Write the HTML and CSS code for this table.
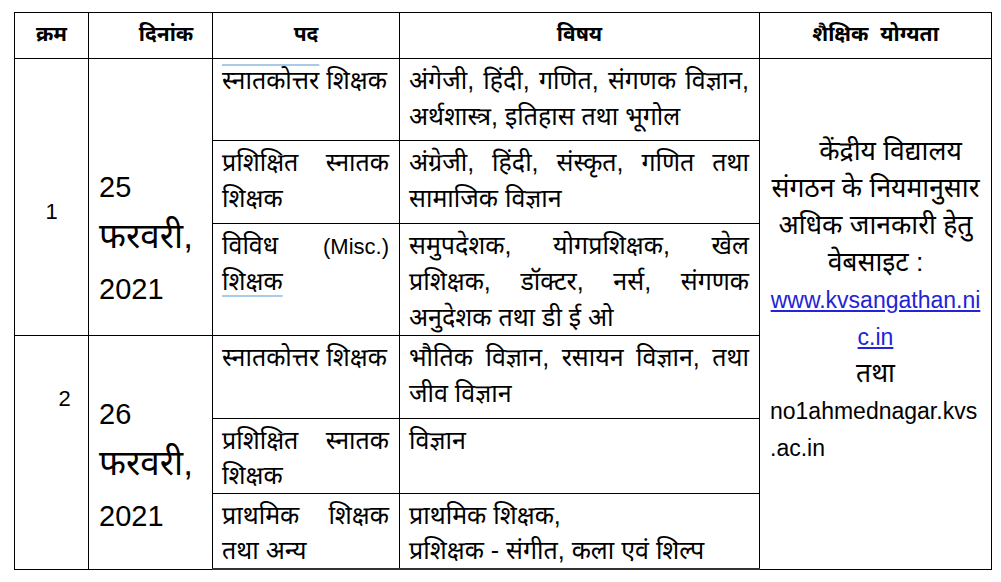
FILE: index.html
```html
<!DOCTYPE html>
<html lang="hi">
<head>
<meta charset="utf-8">
<title>KVS</title>
<link rel="stylesheet" href="styles.css">
</head>
<body>
<div class="sheet">
<table class="kvs">
  <colgroup>
    <col class="c-sn"><col class="c-date"><col class="c-post"><col class="c-subj"><col class="c-qual">
  </colgroup>
  <thead>
    <tr class="r-head">
      <th>क्रम</th>
      <th class="th-date">दिनांक</th>
      <th>पद</th>
      <th>विषय</th>
      <th>शैक्षिक योग्यता</th>
    </tr>
  </thead>
  <tbody>
    <tr class="r1">
      <td rowspan="3" class="sn sn-1">1</td>
      <td rowspan="3" class="date date-1"><span class="dl"><span class="lat">25</span></span><span class="dl">फरवरी,</span><span class="dl"><span class="lat">2021</span></span></td>
      <td class="txt"><span class="mark-top">स्नातकोत्तर</span> शिक्षक</td>
      <td class="txt"><span class="jl">अंगेजी, हिंदी, गणित, संगणक विज्ञान,</span>अर्थशास्त्र, इतिहास तथा भूगोल</td>
      <td rowspan="6" class="qual">
        <span class="q-line q-indent">केंद्रीय विद्यालय</span>
        <span class="q-line">संगठन के नियमानुसार</span>
        <span class="q-line">अधिक जानकारी हेतु</span>
        <span class="q-line">वेबसाइट :</span>
        <span class="q-line"><a class="lat link" href="#">www.kvsangathan.ni</a></span>
        <span class="q-line"><a class="lat link" href="#">c.in</a></span>
        <span class="q-line">तथा</span>
        <span class="q-line q-left"><span class="lat">no1ahmednagar.kvs</span></span>
        <span class="q-line q-left"><span class="lat">.ac.in</span></span>
      </td>
    </tr>
    <tr class="r2">
      <td class="txt"><span class="jl">प्रशिक्षित स्नातक</span>शिक्षक</td>
      <td class="txt"><span class="jl">अंग्रेजी, हिंदी, संस्कृत, गणित तथा</span>सामाजिक विज्ञान</td>
    </tr>
    <tr class="r3">
      <td class="txt"><span class="jl">विविध <span class="lat">(Misc.)</span></span><span class="mark-under">शिक्षक</span></td>
      <td class="txt"><span class="jl">समुपदेशक, योगप्रशिक्षक, खेल</span><span class="jl">प्रशिक्षक, डॉक्टर, नर्स, संगणक</span>अनुदेशक तथा डी ई ओ</td>
    </tr>
    <tr class="r4">
      <td rowspan="3" class="sn sn-2">2</td>
      <td rowspan="3" class="date date-2"><span class="dl"><span class="lat">26</span></span><span class="dl">फरवरी,</span><span class="dl"><span class="lat">2021</span></span></td>
      <td class="txt">स्नातकोत्तर शिक्षक</td>
      <td class="txt"><span class="jl">भौतिक विज्ञान, रसायन विज्ञान, तथा</span>जीव विज्ञान</td>
    </tr>
    <tr class="r5">
      <td class="txt tight"><span class="jl">प्रशिक्षित स्नातक</span>शिक्षक</td>
      <td class="txt tight">विज्ञान</td>
    </tr>
    <tr class="r6">
      <td class="txt tight"><span class="jl">प्राथमिक शिक्षक</span>तथा अन्य</td>
      <td class="txt tight"><span class="blk">प्राथमिक शिक्षक,</span>प्रशिक्षक - संगीत, कला एवं शिल्प</td>
    </tr>
  </tbody>
</table>
</div>
</body>
</html>
```
FILE: styles.css
```css
body {
  margin: 0;
  background: #ffffff;
  color: #000000;
  font-family: "Liberation Sans", "Noto Sans Devanagari", "Lohit Devanagari", "Mangal", "FreeSans", "Noto Sans", sans-serif;
}

.sheet {
  padding: 12px 0 0 14px;
}

.kvs {
  border-collapse: collapse;
  table-layout: fixed;
  width: 978px;
}

.c-sn { width: 74px; }
.c-date { width: 124px; }
.c-post { width: 187px; }
.c-subj { width: 360px; }
.c-qual { width: 232px; }

.kvs th,
.kvs td {
  border: 1px solid #000;
  padding: 0;
  font-size: 25px;
}

.kvs th {
  font-weight: bold;
  font-size: 21px;
  word-spacing: 6px;
  text-align: center;
  vertical-align: middle;
}

.kvs th.th-date {
  padding-left: 31px;
}

.r-head { height: 46px; }
.r1 { height: 82px; }
.r2 { height: 83px; }
.r3 { height: 112px; }
.r4 { height: 83px; }
.r5 { height: 75px; }
.r6 { height: 74px; }

.r6 td {
  border-bottom: 2px solid #333;
}

.lat {
  font-size: 22px;
  line-height: 1;
}

.kvs td.txt {
  vertical-align: top;
  padding: 3px 10px 0 9px;
  line-height: 36px;
  text-align: left;
}

.kvs td.tight {
  line-height: 35px;
  padding-top: 4px;
}

.jl {
  display: block;
  text-align: justify;
  text-align-last: justify;
}

.blk {
  display: block;
}

.mark-top {
  text-decoration: overline;
  text-decoration-color: #a9cbe8;
}

.mark-under {
  text-decoration: underline;
  text-decoration-color: #a9cbe8;
  text-underline-offset: 5px;
}

.kvs td.sn {
  vertical-align: top;
  text-align: center;
  font-size: 22px;
  line-height: 36px;
}

.kvs td.sn-1 { padding-top: 135px; }
.kvs td.sn-2 { padding-top: 45px; padding-left: 26px; }

.kvs td.date {
  vertical-align: top;
  font-size: 35px;
  padding-left: 10px;
}

.dl {
  display: block;
  height: 51px;
  line-height: 51px;
  white-space: nowrap;
}

.date .lat {
  font-size: 29px;
}

.kvs td.date-1 { padding-top: 100px; }
.kvs td.date-2 { padding-top: 50px; }

.kvs td.qual {
  vertical-align: top;
  text-align: center;
  font-size: 26.5px;
  line-height: 37px;
  padding: 74px 10px 0 10px;
}

.qual .lat {
  font-size: 23px;
}

.q-line {
  display: block;
  height: 37px;
  white-space: nowrap;
}

.q-indent {
  padding-left: 30px;
}

.q-left {
  text-align: left;
}

.link {
  color: #2323d8;
  text-decoration: underline;
}
```
